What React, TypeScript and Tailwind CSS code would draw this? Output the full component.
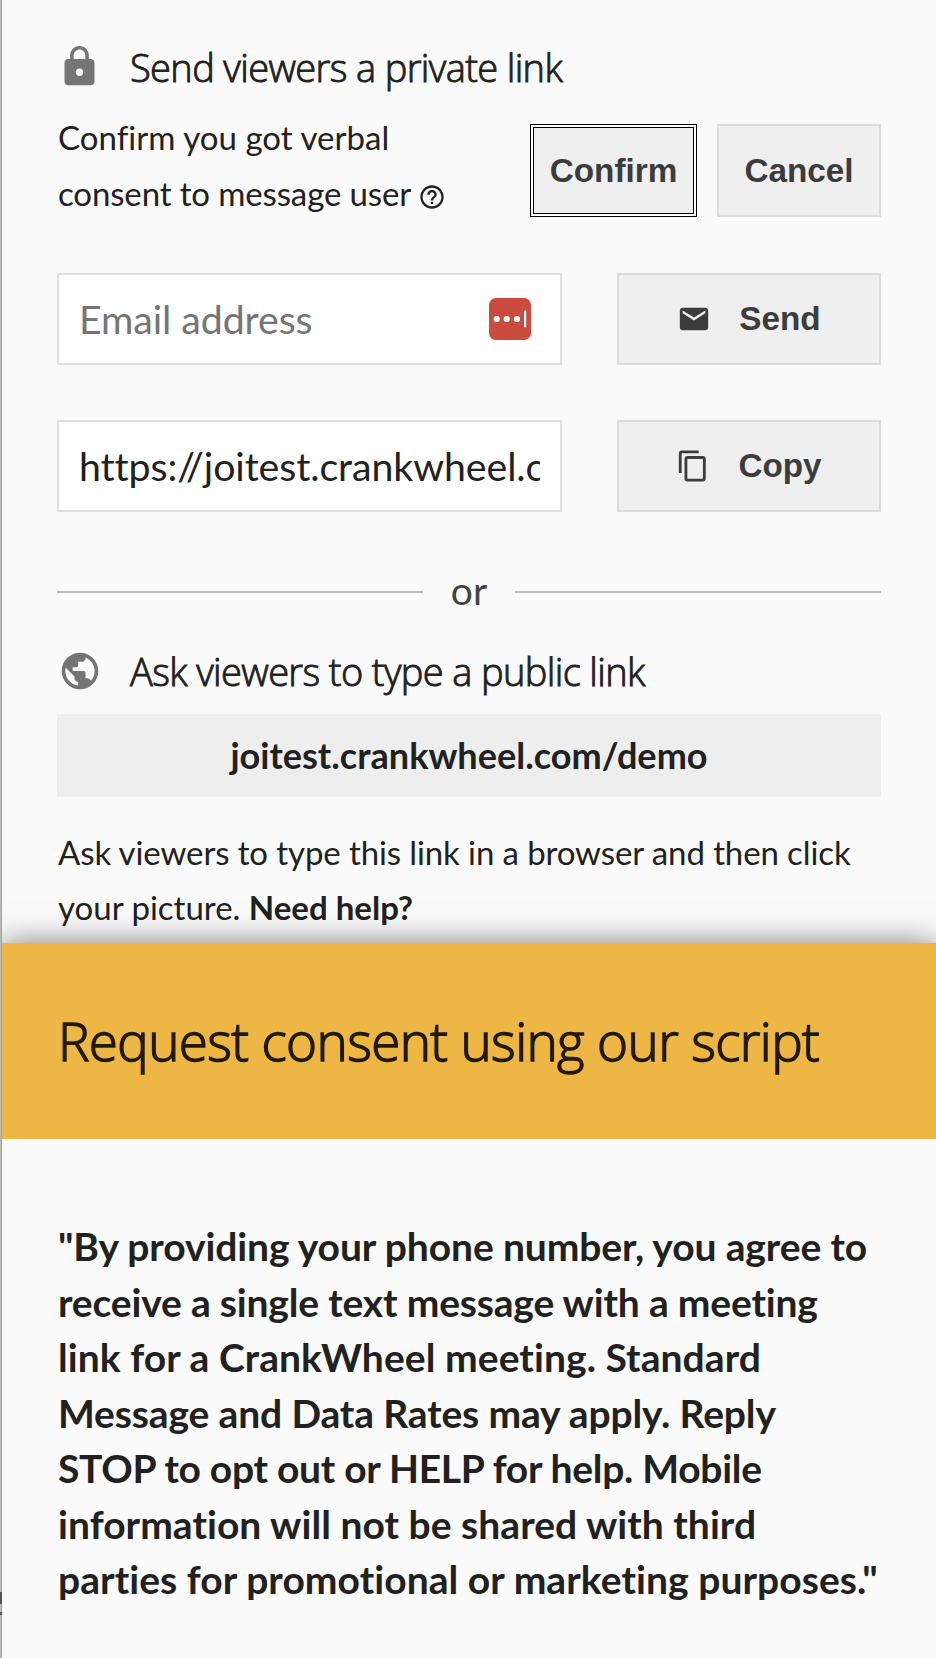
import { clsx } from "clsx";
import type { ReactNode } from "react";
import {
  MdContentCopy,
  MdEmail,
  MdHelpOutline,
  MdLock,
  MdPublic,
} from "react-icons/md";

interface ButtonProps {
  children: ReactNode;
  className?: string;
  focused?: boolean;
}

function Button({ children, className, focused = false }: ButtonProps) {
  return (
    <button
      type="button"
      className={clsx(
        "flex shrink-0 items-center justify-center bg-[#efefef] font-['Liberation_Sans',sans-serif] text-[33.3px] font-bold text-[#3c3c3c]",
        focused
          ? "border border-black shadow-[inset_0_0_0_2px_#fff,inset_0_0_0_3px_#000]"
          : "border-2 border-[#dcdcdc]",
        className
      )}
    >
      {children}
    </button>
  );
}

interface SectionHeadingProps {
  icon: ReactNode;
  children: ReactNode;
}

function SectionHeading({ icon, children }: SectionHeadingProps) {
  return (
    <div className="flex h-11 items-center">
      <div className="flex w-[45px] shrink-0 justify-center pt-px text-[#757575]">{icon}</div>
      <h2 className="ml-7 pt-0.5 font-['Open_Sans',sans-serif] text-[38px] leading-[44px] font-light tracking-[-0.63px] whitespace-nowrap [-webkit-text-stroke:0.9px_#212121]">
        {children}
      </h2>
    </div>
  );
}

// Autofill badge shown inside the email field
function PasswordManagerBadge() {
  return (
    <svg width="42" height="42" viewBox="0 0 42 42" className="shrink-0">
      <rect width="42" height="42" rx="7" fill="#cb4c3f" />
      <circle cx="7.7" cy="21" r="3.1" fill="#fff" />
      <circle cx="17.7" cy="21" r="3.1" fill="#fff" />
      <circle cx="27.9" cy="21" r="3.1" fill="#fff" />
      <rect x="35" y="12.5" width="2.2" height="17" rx="1" fill="#fff" />
    </svg>
  );
}

const FIELD_CLASSES =
  "flex h-[92px] w-[505px] items-center border-2 border-[#dfdfdf] bg-white pl-5";

const INPUT_CLASSES =
  "h-full min-w-0 flex-1 bg-transparent pb-0.5 text-[39.3px] tracking-[-0.08px] outline-none [font-variant-ligatures:none] placeholder:text-[#757575] placeholder:opacity-100";

const CONSENT_LINES = [
  { text: '"By providing your phone number, you agree to', className: "tracking-[-0.11px]" },
  { text: "receive a single text message with a meeting", className: "tracking-[-0.17px]" },
  { text: "link for a CrankWheel meeting. Standard", className: "tracking-[0.07px]" },
  { text: "Message and Data Rates may apply. Reply", className: "tracking-[-0.14px]" },
  { text: "STOP to opt out or HELP for help. Mobile", className: "tracking-[-0.29px]" },
  { text: "information will not be shared with third", className: "tracking-[0.04px]" },
  { text: 'parties for promotional or marketing purposes."', className: "tracking-[0.06px]" },
];

export default function App() {
  return (
    <div className="flex h-[1658px] w-[936px] overflow-hidden bg-[#fafafa] font-['Lato',sans-serif] text-[#212121]">
      {/* Edge of the page behind the panel */}
      <div className="flex w-0.5 shrink-0 flex-col border-r border-[#a0a0a0] bg-[#bdbdbd] pt-[1592px]">
        <div className="h-3 w-0.5 bg-[#555]" />
        <div className="mt-2 h-[3px] w-0.5 bg-[#555]" />
      </div>

      <div className="flex flex-1 flex-col overflow-hidden">
        <section className="px-[55px] pt-11">
          <SectionHeading icon={<MdLock size={45} className="shrink-0" />}>
            Send viewers a private link
          </SectionHeading>

          <div className="mt-[21px] flex h-28 items-start">
            <p className="flex-1 pl-px text-[33px] leading-[56px] whitespace-nowrap">
              <span className="tracking-[0.04px]">Confirm you got verbal</span>
              <br />
              <span className="tracking-[-0.13px]">consent to message user</span>
              <MdHelpOutline size={28} className="ml-[7px] inline-block align-[-5px]" />
            </p>
            <Button focused className="mt-[15px] h-[93px] w-[167px] pt-px">
              Confirm
            </Button>
            <Button className="mt-[15px] ml-5 h-[93px] w-[164px] pt-px">Cancel</Button>
          </div>

          <div className="mt-[52px] flex justify-between">
            <div className={clsx(FIELD_CLASSES, "pr-[29px]")}>
              <input type="email" placeholder="Email address" className={INPUT_CLASSES} />
              <PasswordManagerBadge />
            </div>
            <Button className="h-[92px] w-[264px] gap-7">
              <MdEmail size={34} />
              Send
            </Button>
          </div>

          <div className="mt-[55px] flex justify-between">
            <div className={clsx(FIELD_CLASSES, "pr-[20px]")}>
              <input
                type="text"
                readOnly
                value="https://joitest.crankwheel.com"
                className={INPUT_CLASSES}
              />
            </div>
            <Button className="h-[92px] w-[264px] gap-7">
              <MdContentCopy size={34} />
              Copy
            </Button>
          </div>

          <div className="flex h-[136px] items-center pt-6">
            <div className="h-0.5 flex-1 bg-[#bdbdbd]" />
            <span className="w-[92px] pb-1 text-center text-[39px] leading-none text-[#424242]">or</span>
            <div className="h-0.5 flex-1 bg-[#bdbdbd]" />
          </div>

          <SectionHeading icon={<MdPublic size={44} className="shrink-0" />}>
            Ask viewers to type a public link
          </SectionHeading>

          <div className="mt-[22px] flex h-[83px] items-center justify-center bg-[#eee] text-[36.1px] font-bold">
            joitest.crankwheel.com/demo
          </div>

          <p className="mt-7 pl-px text-[33px] leading-[55px] whitespace-nowrap">
            <span className="tracking-[-0.11px]">
              Ask viewers to type this link in a browser and then click
            </span>
            <br />
            your picture. <span className="font-bold">Need help?</span>
          </p>
        </section>

        <section className="mt-2 flex-1 bg-[#fafafa] shadow-[0_0_28px_rgba(0,0,0,0.5)]">
          <div className="flex h-[196px] items-center bg-[#eeb645] px-[55px] pb-0.5">
            <h1 className="pl-px font-['Open_Sans',sans-serif] text-[53px] leading-none font-light tracking-[-0.65px] whitespace-nowrap text-[#211a0a] [-webkit-text-stroke:1.4px_#211a0a]">
              Request consent using our script
            </h1>
          </div>
          <p className="px-14 pt-20 text-[39px] leading-[55.5px] font-bold whitespace-nowrap [font-variant-ligatures:none]">
            {CONSENT_LINES.map((line) => (
              <span key={line.text} className={clsx("block", line.className)}>
                {line.text}
              </span>
            ))}
          </p>
        </section>
      </div>
    </div>
  );
}
